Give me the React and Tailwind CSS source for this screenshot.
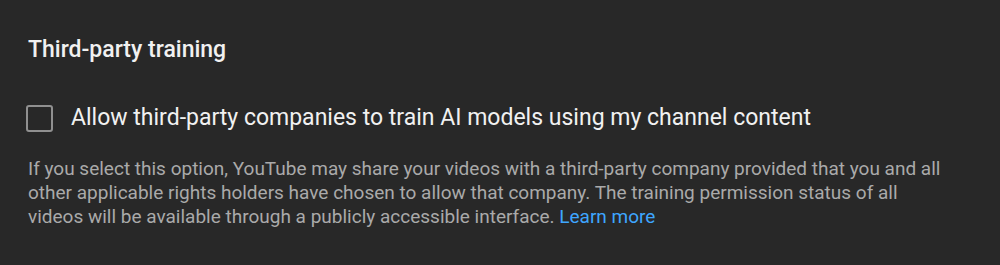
import React from 'react'

const App = () => {
  return (
    <div className="w-[1000px] h-[265px] bg-[#282828] text-white px-[28px] pt-[36px]" style={{ fontFamily: 'Roboto, "Liberation Sans", sans-serif' }}>
      <h2 className="text-[23px] leading-[28px] font-medium text-[#f1f1f1]">Third-party training</h2>
      <label className="mt-[40px] flex items-center gap-[18px] -ml-[2px] cursor-pointer">
        <span className="w-[27px] h-[27px] rounded-[3px] border-2 border-[#909090] shrink-0"></span>
        <span className="text-[23px] leading-[28px] text-[#f1f1f1]">Allow third-party companies to train AI models using my channel content</span>
      </label>
      <p className="mt-[25px] text-[19px] leading-[24px] text-[#aaaaaa] w-[918px]">
        If you select this option, YouTube may share your videos with a third-party company provided that you and all other applicable rights holders have chosen to allow that company. The training permission status of all videos will be available through a publicly accessible interface.{' '}
        <a href="#" className="text-[#3ea6ff]">Learn more</a>
      </p>
    </div>
  )
}

export default App
